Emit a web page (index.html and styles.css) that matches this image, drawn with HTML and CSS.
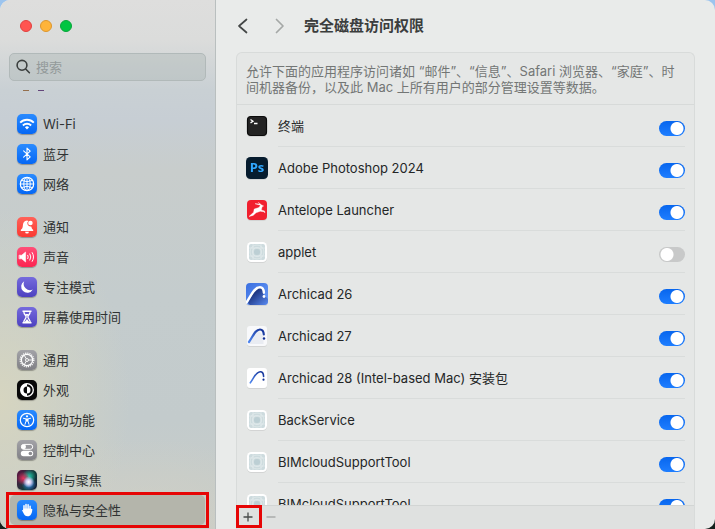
FILE: index.html
```html
<!DOCTYPE html>
<html lang="zh-CN">
<head>
    <meta charset="UTF-8">
    <meta name="viewport" content="width=device-width, initial-scale=1.0">
    <title>完全磁盘访问权限</title>
    <link rel="stylesheet" href="styles.css">
</head>
<body>
    <!-- shared gradients and the generic app icon -->
    <svg class="defs" width="0" height="0" aria-hidden="true">
        <defs>
            <linearGradient id="arc" x1="0" y1="1" x2="1" y2="0">
                <stop offset="0" stop-color="#4f86ee"/>
                <stop offset="1" stop-color="#112f94"/>
            </linearGradient>
            <linearGradient id="arcBg" x1="0" y1="0" x2="1" y2="1">
                <stop offset="0" stop-color="#3a6fe0"/>
                <stop offset="1" stop-color="#6b9cf8"/>
            </linearGradient>
            <linearGradient id="arcFill" x1="0" y1="0" x2="1" y2="1">
                <stop offset="0.2" stop-color="#14276f"/>
                <stop offset="1" stop-color="#5a8cf3"/>
            </linearGradient>
            <symbol id="generic" viewBox="0 0 22 22">
                <rect x="1" y="1" width="20" height="20" rx="4.5" fill="#fff"/>
                <rect x="3" y="3" width="16" height="16" rx="2" fill="#cddbde"/>
                <g fill="none" stroke="#e6eeef" stroke-width="0.6">
                    <path d="M7 3v16M15 3v16M3 7h16M3 15h16"/>
                    <circle cx="11" cy="11" r="4.5"/>
                    <circle cx="11" cy="11" r="7"/>
                </g>
                <circle cx="11" cy="11" r="3" fill="#bccfd4"/>
            </symbol>
        </defs>
    </svg>

    <div class="window">
        <aside class="sidebar">
            <div class="lights">
                <button class="light red" aria-label="关闭"></button>
                <button class="light yellow" aria-label="最小化"></button>
                <button class="light green" aria-label="缩放"></button>
            </div>

            <label class="search">
                <svg viewBox="0 0 16 16" width="16" height="16" fill="none" stroke="#3c403f" stroke-width="1.6" stroke-linecap="round"><circle cx="6" cy="6.3" r="4.9"/><path d="M9.7 10l3.700 3.700"/></svg>
                <input type="search" placeholder="搜索" aria-label="搜索">
            </label>

            <div class="peek">
                <svg viewBox="0 0 40 1" width="40" height="1"><path d="M7 .5h6" stroke="#946f4d"/><path d="M22 .5h6" stroke="#63457a"/></svg>
            </div>

            <nav>
                <div class="group">
                    <a href="#" class="item">
                        <span class="icon blue"><svg viewBox="0 0 20 20" fill="none" stroke="#fff" stroke-width="1.9"><path d="M3.2 8.6a9.6 9.6 0 0 1 13.6 0"/><path d="M5.9 11.5a5.8 5.8 0 0 1 8.2 0"/><path d="M10 15.4l-2.1-2.2a3 3 0 0 1 4.2 0z" fill="#fff" stroke="none"/></svg></span>
                        Wi-Fi
                    </a>
                    <a href="#" class="item">
                        <span class="icon blue"><svg viewBox="0 0 20 20" fill="none" stroke="#fff" stroke-width="1.1" stroke-linejoin="round" stroke-linecap="round"><path d="M6.6 6.9l6.6 6L10 15.9V4.1l3.2 3-6.6 6"/></svg></span>
                        蓝牙
                    </a>
                    <a href="#" class="item">
                        <span class="icon blue"><svg viewBox="0 0 20 20" fill="none" stroke="#fff" stroke-width="1"><circle cx="10" cy="10" r="6.7" stroke-width="1.2"/><ellipse cx="10" cy="10" rx="3.2" ry="6.7"/><path d="M10 3.3v13.4M3.3 10h13.4M4.5 6.4q5.5 2.6 11 0M4.5 13.6q5.5-2.6 11 0"/></svg></span>
                        网络
                    </a>
                </div>

                <div class="group">
                    <a href="#" class="item">
                        <span class="icon coral"><svg viewBox="0 0 20 20" fill="#fff"><path d="M10 3.4c-2.9.4-3.9 2.3-4.1 4.8-.2 2.6-.8 3.6-2 4.6-.5.5-.2 1.2.4 1.2h11.400c.6 0 .9-.7.4-1.200-1-.9-1.500-1.700-1.800-3.300a3.300 3.300 0 0 1-3-5.600A4 4 0 0 0 10 3.400z"/><path d="M8.1 14.700h3.800a1.900 1.900 0 0 1-3.800 0z"/><circle cx="13.4" cy="6" r="2.3"/></svg></span>
                        通知
                    </a>
                    <a href="#" class="item">
                        <span class="icon pink"><svg viewBox="0 0 20 20" fill="none" stroke="#fff" stroke-linecap="round"><path d="M2.4 8.2h2.3L8.6 5v10l-3.9-3.200H2.4z" fill="#fff" stroke-linejoin="round" stroke-width=".6"/><path d="M10.800 8.300q1 1.700 0 3.400M12.900 6.900q2 3.100 0 6.200M15.200 5.600q2.800 4.400 0 8.800" stroke-width="1"/></svg></span>
                        声音
                    </a>
                    <a href="#" class="item">
                        <span class="icon indigo"><svg viewBox="0 0 20 20" fill="#fff"><path d="M7.2 4.2a6.200 6.200 0 1 0 8.600 8.300A6.400 6.400 0 0 1 7.200 4.200z"/></svg></span>
                        专注模式
                    </a>
                    <a href="#" class="item">
                        <span class="icon indigo"><svg viewBox="0 0 20 20" fill="none" stroke="#fff" stroke-width="1.3"><path d="M5.500 4.300h9M5.500 15.700h9" stroke-width="1.6"/><path d="M6.800 4.500c0 3 2.300 4 2.300 5.500s-2.300 2.500-2.300 5.500M13.200 4.500c0 3-2.300 4-2.300 5.500s2.300 2.500 2.300 5.500"/><path d="M8 7h4l-2 2.500zM7.500 15.200L10 12l2.500 3.200z" fill="#fff" stroke="none"/></svg></span>
                        屏幕使用时间
                    </a>
                </div>

                <div class="group">
                    <a href="#" class="item">
                        <span class="icon gray"><svg viewBox="0 0 20 20" fill="none" stroke="#fff"><circle cx="10" cy="10" r="6.8" stroke-width="1.3" stroke-dasharray="1.2 .94"/><circle cx="10" cy="10" r="5.6" stroke-width="1.2"/><circle cx="10" cy="10" r="1.5" stroke-width=".9"/><path d="M11.500 10h4M9.200 8.700l-2-3.500M9.200 11.300l-2 3.500" stroke-width=".9"/></svg></span>
                        通用
                    </a>
                    <a href="#" class="item">
                        <span class="icon black"><svg viewBox="0 0 20 20"><circle cx="10" cy="10" r="6.3" fill="none" stroke="#fff" stroke-width="1.3"/><path d="M10 3.500a6.500 6.500 0 0 0 0 13v-3a3.500 3.500 0 0 1 0-7z" fill="#fff"/><path d="M10 6.500a3.500 3.500 0 0 1 0 7z" fill="#fff"/></svg></span>
                        外观
                    </a>
                    <a href="#" class="item">
                        <span class="icon blue"><svg viewBox="0 0 20 20" fill="none" stroke="#fff" stroke-linecap="round" stroke-linejoin="round"><circle cx="10" cy="10" r="6.7" stroke-width="1.2"/><circle cx="10" cy="6.3" r="1.1" fill="#fff" stroke="none"/><path d="M6.400 8.300l2.600.6v2.300l-1 3.100M13.600 8.300l-2.600.6v2.300l1 3.100" stroke-width="1"/><path d="M9 8.600h2v3H9z" fill="#fff" stroke="none"/></svg></span>
                        辅助功能
                    </a>
                    <a href="#" class="item">
                        <span class="icon gray"><svg viewBox="0 0 20 20"><rect x="4.3" y="4.4" width="11.4" height="4.9" rx="2.45" fill="none" stroke="#fff" stroke-width="1"/><circle cx="6.7" cy="6.850" r="2.3" fill="#fff"/><rect x="3.8" y="10.8" width="12.4" height="5.4" rx="2.7" fill="#fff"/><circle cx="13.4" cy="13.5" r="1.8" fill="#8b8b90"/></svg></span>
                        控制中心
                    </a>
                    <a href="#" class="item">
                        <span class="icon siri"></span>
                        Siri与聚焦
                    </a>
                    <a href="#" class="item selected">
                        <span class="icon blue"><svg viewBox="0 0 20 20" fill="none" stroke="#fff" stroke-width="1.5" stroke-linecap="round"><path d="M7 10V5.700M9 9V4.400M11.100 9V4.700M13.100 10V6.200"/><path d="M6.250 8.500h7.600l1.500.7c-.3 4.200-1.500 7.100-4.700 7.100-2.300 0-3.200-1.100-4.100-3L5 10.300c.4-.6 1-.5 1.250.1z" fill="#fff" stroke="none"/></svg></span>
                        隐私与安全性
                        <span class="mark"></span>
                    </a>
                </div>
            </nav>
        </aside>

        <main class="content">
            <header class="toolbar">
                <button class="arrow" aria-label="返回"><svg viewBox="0 0 12 18" width="12" height="18"><path d="M9.500 2.500L2 9l7.500 6.500"/></svg></button>
                <button class="arrow" aria-label="前进" disabled><svg viewBox="0 0 12 18" width="12" height="18"><path d="M2.500 2.500L9 9l-6.500 6.500"/></svg></button>
                <h1>完全磁盘访问权限</h1>
            </header>

            <section class="card">
                <p class="note">允许下面的应用程序访问诸如 “邮件”、“信息”、Safari 浏览器、“家庭”、时<br>间机器备份，以及此 Mac 上所有用户的部分管理设置等数据。</p>

                <ul class="apps">
                    <li>
                        <svg class="app" viewBox="0 0 22 22"><rect x="1.5" y="1.5" width="19" height="19" rx="3.5" fill="#232323" stroke="#0b0b0b" stroke-width="1.2"/><path d="M4.500 4.500l2.500 1.700-2.500 1.700M8 8.500h3.500" fill="none" stroke="#fff" stroke-width="1.3"/></svg>
                        <label for="app1">终端</label>
                        <input type="checkbox" id="app1" checked>
                    </li>
                    <li>
                        <svg class="app" viewBox="0 0 22 22"><rect width="22" height="22" rx="4.5" fill="#061c2e"/><text x="11" y="15" class="ps">Ps</text></svg>
                        <label for="app2">Adobe Photoshop 2024</label>
                        <input type="checkbox" id="app2" checked>
                    </li>
                    <li>
                        <svg class="app" viewBox="0 0 22 22"><rect x="1" y="1" width="20" height="20" rx="4" fill="#f1202f"/><path d="M3 17.500l4.600-4.300.6-3.100 4.800-1.600 1.500-2.300-5.500-1.500 5 .4-1.700-1.700 3.300 2.500 2 1.100-1.500.8-.8 3.200 3.100.9.6 1.900-1.300-1.100-3.400-.4-4.200 1.400-3 2.700z" fill="#fff" stroke="#fff" stroke-width=".4"/></svg>
                        <label for="app3">Antelope Launcher</label>
                        <input type="checkbox" id="app3" checked>
                    </li>
                    <li>
                        <svg class="app"><use href="#generic"/></svg>
                        <label for="app4">applet</label>
                        <input type="checkbox" id="app4">
                    </li>
                    <li>
                        <svg class="app" viewBox="0 0 22 22"><rect width="22" height="22" rx="4" fill="url(#arcBg)"/><path d="M2 20C6 12 9 5 14 4.500c2.500-.2 3.500 2.500 3.500 7L22 16v2a4 4 0 0 1-4 4H4z" fill="url(#arcFill)"/><path d="M.5 19.500C5 13 8 4.200 14 4.200c2.700 0 3.700 2 3.900 5.500" fill="none" stroke="#fff" stroke-width="2.4" stroke-linecap="round"/><circle cx="18" cy="13.5" r="1.4" fill="#fff"/></svg>
                        <label for="app5">Archicad 26</label>
                        <input type="checkbox" id="app5" checked>
                    </li>
                    <li>
                        <svg class="app" viewBox="0 0 22 22"><rect x="1" y="1" width="20" height="20" rx="3" fill="#f8f9fb"/><path d="M3 17L12 5l5.500 6v8H4z" fill="#e9ecf2"/><path d="M3 17C7 11.500 9 4.500 14 4.500c2.700 0 3.600 2 3.800 5" fill="none" stroke="url(#arc)" stroke-width="2.2" stroke-linecap="round"/><circle cx="18" cy="13.5" r="1.2" fill="#112f94"/></svg>
                        <label for="app6">Archicad 27</label>
                        <input type="checkbox" id="app6" checked>
                    </li>
                    <li>
                        <svg class="app" viewBox="0 0 22 22"><rect x="1" y="1" width="20" height="20" rx="3" fill="#fff"/><path d="M4.300 15.800C8 10.500 10 4.800 14.300 4.800c2.300 0 3.200 2 3.300 4.700" fill="none" stroke="url(#arc)" stroke-width="1.6" stroke-linecap="round"/><circle cx="17.5" cy="12.7" r="1.1" fill="#112f94"/></svg>
                        <label for="app7">Archicad 28 (Intel-based Mac) 安装包</label>
                        <input type="checkbox" id="app7" checked>
                    </li>
                    <li>
                        <svg class="app"><use href="#generic"/></svg>
                        <label for="app8">BackService</label>
                        <input type="checkbox" id="app8" checked>
                    </li>
                    <li>
                        <svg class="app"><use href="#generic"/></svg>
                        <label for="app9">BIMcloudSupportTool</label>
                        <input type="checkbox" id="app9" checked>
                    </li>
                    <li>
                        <svg class="app"><use href="#generic"/></svg>
                        <label for="app10">BIMcloudSupportTool</label>
                        <input type="checkbox" id="app10" checked>
                    </li>
                </ul>

                <footer class="actions">
                    <button class="add" aria-label="添加"><svg viewBox="0 0 10 10" width="10" height="10"><path d="M5 .5v9M.5 5h9"/></svg><span class="mark"></span></button>
                    <button aria-label="移除" disabled><svg viewBox="0 0 10 10" width="10" height="10"><path d="M.5 5h9"/></svg></button>
                </footer>
            </section>
        </main>
    </div>
</body>
</html>
```
FILE: styles.css
```css
* {
    box-sizing: border-box;
}
body {
    margin: 0;
    font-family: Inter, "Noto Sans CJK SC", sans-serif;
    font-size: 13px;
    line-height: 16px;
    color: #242626;
    background: linear-gradient(#9cc4ee 50%, #14201c 50%);
}
button {
    padding: 0;
    border: none;
    background: none;
}
.defs {
    position: absolute;
}
.window {
    display: flex;
    height: 100vh;
    border-radius: 10px;
    overflow: hidden;
    background: #e9ebea;
}

/* sidebar */
.sidebar {
    flex: none;
    width: 216px;
    padding: 20px 9px 0;
    border-right: 1px solid #b9bfbf;
    background:
        radial-gradient(ellipse 130px 190px at 0 400px, #d6d5c0, rgba(214, 213, 192, 0)),
        radial-gradient(ellipse 150px 90px at 150px 529px, #cfcfc5, rgba(207, 207, 197, 0)),
        linear-gradient(#dededd 0, #dbdcdb 40px, #c9d0d4 90px, #c7ced4 120px, #c8cdcc 170px, #c4cccd 300px, #c3cbcc 420px, #c9cdc8 529px);
}
.lights {
    display: flex;
    gap: 8px;
    padding-left: 11px;
}
.light {
    width: 12px;
    height: 12px;
    border-radius: 50%;
}
.red {
    background: #ff5450;
    border: 1px solid #e1413f;
}
.yellow {
    background: #ffb43a;
    border: 1px solid #dc962f;
}
.green {
    background: #00c541;
    border: 1px solid #08a53a;
}
.search {
    display: flex;
    align-items: center;
    gap: 4px;
    height: 28px;
    margin-top: 21px;
    padding: 0 6px;
    border: 1px solid #b1b9b9;
    border-radius: 5px;
    background: rgba(165, 178, 176, 0.35);
}
.search input {
    flex: 1;
    min-width: 0;
    padding: 0;
    border: none;
    outline: none;
    background: none;
    font: inherit;
}
.search input::placeholder {
    color: #939a9a;
}
.peek {
    display: flex;
    height: 28px;
    padding: 9px 0 0 7px;
}
.group {
    margin-bottom: 13px;
}
.item {
    position: relative;
    display: flex;
    align-items: center;
    gap: 6px;
    height: 30px;
    margin: 0 1px;
    padding: 0 7px;
    border-radius: 5px;
    color: #303333;
    text-decoration: none;
}
.selected {
    background: #b4b5ab;
}
.icon {
    width: 20px;
    height: 20px;
    border-radius: 5px;
    box-shadow: 0 1px 1px rgba(0, 0, 0, 0.3);
}
.icon svg {
    display: block;
}
.blue {
    background: linear-gradient(#2a8bff, #0567f5);
}
.coral {
    background: linear-gradient(#ff6259, #fb3932);
}
.pink {
    background: linear-gradient(#ff4f78, #fc2450);
}
.indigo {
    background: linear-gradient(#756bdd, #4d41c0);
}
.gray {
    background: linear-gradient(#a3a3a8, #808085);
}
.black {
    background: #080808;
}
.siri {
    background:
        radial-gradient(circle at 58% 60%, #fff 0, #d5cdf0 14%, transparent 34%),
        radial-gradient(circle at 32% 42%, #e8325f 0, transparent 38%),
        radial-gradient(circle at 60% 32%, #23c9a9 0, transparent 38%),
        radial-gradient(circle at 60% 70%, #348ae8 0, transparent 40%),
        linear-gradient(120deg, #5d1040, #103f3b 60%, #151433);
}

/* red highlight frames */
.mark {
    position: absolute;
    inset: -3px -4px;
    border: 3px solid #e60505;
    pointer-events: none;
}

/* content */
.content {
    flex: 1;
    min-width: 0;
    display: flex;
    flex-direction: column;
    padding: 0 20px;
}
.toolbar {
    flex: none;
    display: flex;
    align-items: center;
    height: 52px;
    gap: 24px;
}
.toolbar h1 {
    margin: 0 0 0 -6px;
    font-size: 15px;
    line-height: 20px;
    font-weight: 700;
    color: #3b3d3d;
}
.arrow {
    display: flex;
    padding-left: 1px;
}
.arrow path {
    fill: none;
    stroke: #444747;
    stroke-width: 1.7;
    stroke-linecap: round;
    stroke-linejoin: round;
}
.arrow:disabled path {
    stroke: #a5a8a7;
}
.card {
    flex: 1;
    min-height: 0;
    display: flex;
    flex-direction: column;
    border: 1px solid #d8dbda;
    border-bottom: none;
    border-radius: 6px 6px 0 0;
    background: #e5e7e6;
}
.note {
    flex: none;
    margin: 0;
    padding: 10px 9px 9px;
    border-bottom: 1px solid #d7dad9;
    color: #737675;
    white-space: nowrap;
}
.apps {
    flex: 1;
    min-height: 0;
    overflow: hidden;
    margin: 0;
    padding: 0 9px;
    list-style: none;
}
.apps li {
    display: grid;
    grid-template-columns: 22px 1fr 26px;
    column-gap: 10px;
    align-items: center;
    height: 42px;
    background: linear-gradient(#d9dcdb, #d9dcdb) 32px 100% / 100% 1px no-repeat;
}
.app {
    width: 22px;
    height: 22px;
    filter: drop-shadow(0 1px 0 rgba(0, 0, 0, 0.08));
}
.ps {
    font-family: "Open Sans", sans-serif;
    font-size: 13px;
    font-weight: 700;
    text-anchor: middle;
    fill: #31a8ff;
}
.apps input {
    appearance: none;
    width: 26px;
    height: 15px;
    margin: 4px 0 0;
    border-radius: 8px;
    background:
        radial-gradient(circle at 8px 50%, #fff 6px, transparent 7px),
        #c8c9c9;
}
.apps input:checked {
    background:
        radial-gradient(circle at 18px 50%, #fff 6px, transparent 7px),
        linear-gradient(#0866ee, #1e7eff);
}
.actions {
    flex: none;
    display: flex;
    height: 24px;
    border-top: 1px solid #d2d5d4;
    background: #dfe1e0;
}
.actions button {
    position: relative;
    display: flex;
    align-items: center;
    justify-content: center;
    width: 24px;
    height: 22px;
}
.actions .add {
    width: 22px;
}
.actions path {
    stroke: #484b4a;
    stroke-width: 1.3;
}
.actions button:disabled path {
    stroke: #a1a4a3;
}
.actions .mark {
    inset: -1px -3px 0 -1px;
}
```
